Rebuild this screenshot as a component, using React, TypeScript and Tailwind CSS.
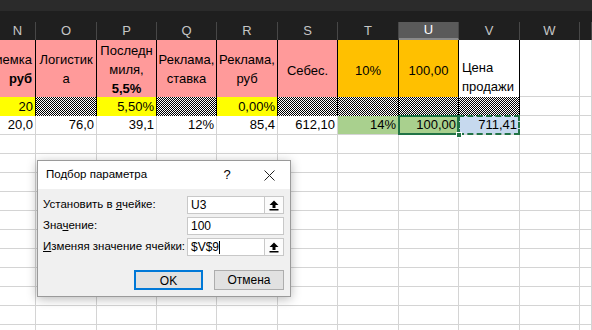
import { FC, ReactNode } from "react";

type Col = { id: string; w: string };

const cols: Col[] = [
  { id: "N", w: "w-[36px]" },
  { id: "O", w: "w-[61px]" },
  { id: "P", w: "w-[60px]" },
  { id: "Q", w: "w-[60px]" },
  { id: "R", w: "w-[61px]" },
  { id: "S", w: "w-[60px]" },
  { id: "T", w: "w-[61px]" },
  { id: "U", w: "w-[60px]" },
  { id: "V", w: "w-[61px]" },
  { id: "W", w: "w-[60px]" },
  { id: "", w: "w-[12px]" },
];

const checker =
  "bg-[repeating-conic-gradient(#000_0%_25%,#fff_0%_50%)] bg-[length:2px_2px]";

type CellProps = { w: string; className?: string; children?: ReactNode };

const Cell: FC<CellProps> = ({ w, className, children }) => (
  <div className={`${w} shrink-0 h-full border-r relative ${className ?? ""}`}>{children}</div>
);

const ColumnHeader = () => (
  <div className="flex h-[18px] bg-[#1f1f1f]">
    {cols.map((c) => (
      <div
        key={c.id + c.w}
        className={`${c.w} shrink-0 h-full border-r border-[#474747] flex items-center justify-center text-[13px] ${
          c.id === "U" ? "bg-[#5a5a5a] text-white border-b-2 border-b-[#8a8a8a]" : "text-[#c6c6c6]"
        }`}
      >
        {c.id}
      </div>
    ))}
  </div>
);

const pink = "bg-[#ff9a9a] border-black";

const TitleRow = () => (
  <div className="flex h-[57px] leading-[19px] text-[13px] text-black">
    <Cell w={cols[0].w} className={`${pink} overflow-hidden flex flex-col justify-center items-end pr-[3px] whitespace-nowrap`}>
      <span>Приемка</span>
      <span className="font-bold">руб</span>
    </Cell>
    <Cell w={cols[1].w} className={`${pink} flex flex-col justify-center items-center`}>
      <span>Логистик</span>
      <span>а</span>
    </Cell>
    <Cell w={cols[2].w} className={`${pink} flex flex-col justify-center items-center pt-[2px]`}>
      <span>Последн</span>
      <span>миля,</span>
      <span className="font-bold">5,5%</span>
    </Cell>
    <Cell w={cols[3].w} className={`${pink} flex flex-col justify-center items-center`}>
      <span>Реклама,</span>
      <span>ставка</span>
    </Cell>
    <Cell w={cols[4].w} className={`${pink} flex flex-col justify-center items-center`}>
      <span>Реклама,</span>
      <span>руб</span>
    </Cell>
    <Cell w={cols[5].w} className={`${pink} flex items-center justify-center pt-[4px]`}>
      Себес.
    </Cell>
    <Cell w={cols[6].w} className="bg-[#ffc000] border-black flex items-center justify-center pt-[4px]">
      10%
    </Cell>
    <Cell w={cols[7].w} className="bg-[#ffc000] border-black flex items-center justify-center pt-[4px]">
      100,00
    </Cell>
    <Cell w={cols[8].w} className="bg-white border-black flex flex-col justify-end pl-[3px] pb-[1px]">
      <span>Цена</span>
      <span>продажи</span>
    </Cell>
    <Cell w={cols[9].w} className="bg-white border-[#d4d4d4] border-b" />
    <Cell w={cols[10].w} className="bg-white border-[#d4d4d4] border-b" />
  </div>
);

const yellow = "bg-[#ffff00] border-black flex items-center justify-end pr-[2px]";
const chk = `${checker} border-black`;

const InputRow = () => (
  <div className="flex h-[19px] text-[13px] text-black">
    <Cell w={cols[0].w} className={yellow}>20</Cell>
    <Cell w={cols[1].w} className={chk} />
    <Cell w={cols[2].w} className={yellow}>5,50%</Cell>
    <Cell w={cols[3].w} className={chk} />
    <Cell w={cols[4].w} className={yellow}>0,00%</Cell>
    <Cell w={cols[5].w} className={chk} />
    <Cell w={cols[6].w} className={chk} />
    <Cell w={cols[7].w} className={chk} />
    <Cell w={cols[8].w} className={chk} />
    <Cell w={cols[9].w} className="bg-white border-[#d4d4d4] border-b" />
    <Cell w={cols[10].w} className="bg-white border-[#d4d4d4] border-b" />
  </div>
);

const grid = "border-[#d4d4d4] border-b bg-white flex items-center justify-end pr-[2px]";

const ValuesRow = () => (
  <div className="flex h-[19px] text-[13px] text-black">
    <Cell w={cols[0].w} className={grid}>20,0</Cell>
    <Cell w={cols[1].w} className={grid}>76,0</Cell>
    <Cell w={cols[2].w} className={grid}>39,1</Cell>
    <Cell w={cols[3].w} className={grid}>12%</Cell>
    <Cell w={cols[4].w} className={grid}>85,4</Cell>
    <Cell w={cols[5].w} className={grid}>612,10</Cell>
    <Cell w={cols[6].w} className={`${grid} !bg-[#a9d08e]`}>14%</Cell>
    <Cell w={cols[7].w} className={`${grid} !bg-[#a9d08e] z-10`}>
      100,00
      <div className="absolute -left-[1px] -top-[1px] -right-[1px] -bottom-[1px] border-2 border-[#217346]" />
      <div className="absolute -right-[4px] -bottom-[4px] w-[6px] h-[6px] bg-[#217346] border border-white" />
    </Cell>
    <Cell w={cols[8].w} className={`${grid} !bg-[#c6d9ee]`}>
      711,41
      <div className="absolute -left-[1px] -top-[1px] -right-[1px] -bottom-[1px] border-2 border-dashed border-[#217346]" />
    </Cell>
    <Cell w={cols[9].w} className={grid} />
    <Cell w={cols[10].w} className={grid} />
  </div>
);

const EmptyRow = () => (
  <div className="flex h-[19px]">
    {cols.map((c) => (
      <Cell key={c.id + c.w} w={c.w} className="bg-white border-[#d4d4d4] border-b" />
    ))}
  </div>
);

const PickIcon = () => (
  <svg width="10" height="11" viewBox="0 0 10 11">
    <polygon points="5,0.5 9.5,5 6.5,5 6.5,8 3.5,8 3.5,5 0.5,5" fill="#000" />
    <rect x="0.5" y="9" width="9" height="1.5" fill="#000" />
  </svg>
);

type FieldProps = { value: string; picker?: boolean; caret?: boolean };

const Field: FC<FieldProps> = ({ value, picker, caret }) => (
  <div className="flex h-[18px] w-[97px] shrink-0 bg-white border border-[#c8c8c8]">
    <div className="flex-1 flex items-center pl-[3px] text-[12px] text-black">
      {value}
      {caret && <span className="inline-block w-px h-[13px] bg-black" />}
    </div>
    {picker && (
      <div className="w-[19px] border-l border-[#c8c8c8] flex items-center justify-center bg-[#fbfbfb]">
        <PickIcon />
      </div>
    )}
  </div>
);

const GoalSeekDialog = () => (
  <div className="absolute left-[37px] top-[160px] w-[254px] h-[137px] bg-[#f0f0f0] border border-[#9a9a9a] shadow-[0_2px_10px_rgba(0,0,0,0.28)] text-black">
    <div className="h-[28px] bg-white flex items-center pl-[8px] pr-[14px] text-[11.5px]">
      <span className="flex-1">Подбор параметра</span>
      <span className="w-[20px] text-center text-[13px] mr-[27px]">?</span>
      <svg width="11" height="11" viewBox="0 0 11 11" className="mr-[1px]">
        <path d="M0.5 0.5 L10.5 10.5 M10.5 0.5 L0.5 10.5" stroke="#222" strokeWidth="1" />
      </svg>
    </div>
    <div className="flex flex-col gap-[3px] pt-[7px] pl-[5px] pr-[6px] text-[11.5px]">
      <div className="flex items-center justify-between whitespace-nowrap">
        <span>
          Установить в <u>я</u>чейке:
        </span>
        <Field value="U3" picker />
      </div>
      <div className="flex items-center justify-between whitespace-nowrap">
        <span>
          Зна<u>ч</u>ение:
        </span>
        <Field value="100" />
      </div>
      <div className="flex items-center justify-between whitespace-nowrap">
        <span>
          <u>И</u>зменяя значение ячейки:
        </span>
        <Field value="$V$9" picker caret />
      </div>
      <div className="flex justify-end gap-[11px] pt-[11px]">
        <button className="w-[69px] h-[20px] bg-[#e1e1e1] border-2 border-[#0078d7] text-[12px]">OK</button>
        <button className="w-[70px] h-[20px] bg-[#e1e1e1] border border-[#adadad] text-[12px]">Отмена</button>
      </div>
    </div>
  </div>
);

const App = () => (
  <div className="relative w-[592px] h-[330px] overflow-hidden bg-white font-['Liberation_Sans',Arial,sans-serif]">
    <div className="h-[11px] bg-[#2b2b2b]" />
    <div className="h-[11px] bg-[#1f1f1f]" />
    <ColumnHeader />
    <TitleRow />
    <InputRow />
    <ValuesRow />
    {Array.from({ length: 11 }).map((_, i) => (
      <EmptyRow key={i} />
    ))}
    <GoalSeekDialog />
  </div>
);

export default App;
